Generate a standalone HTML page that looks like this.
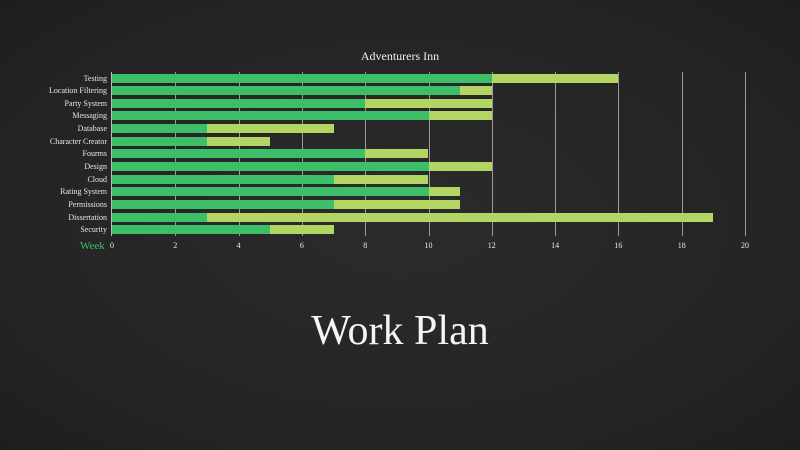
<!DOCTYPE html>
<html><head><style>
body{margin:0;width:800px;height:450px;overflow:hidden;background:radial-gradient(ellipse at center,#2b2b2b 0%,#242424 70%,#1e1e1e 100%);font-family:"Liberation Serif",serif;position:relative}
.a{position:absolute}
.lbl{position:absolute;right:693px;font-size:8px;color:#e8e8e8;white-space:nowrap;line-height:9px}
.g{position:absolute;top:72px;height:164px;width:1px;background:#9a9a9a}
.t{position:absolute;top:241px;font-size:8px;color:#e8e8e8;width:20px;text-align:center;margin-left:-10px}
.b1{position:absolute;height:9px;background:#3dbf6a;left:112px}
.b2{position:absolute;height:9px;background:#b2d564}
</style></head><body>
<div class="a" style="left:0;width:800px;top:49px;text-align:center;font-size:12px;color:#f0f0f0">Adventurers Inn</div>
<div id="c"></div>
<div class="a" style="left:80px;top:240px;font-size:11px;color:#3dbf6a">Week</div>
<div class="a" style="left:0;width:800px;top:307px;text-align:center;font-size:42px;color:#f5f5f5">Work Plan</div>
<script>
var d=[["Testing",12,16],["Location Filtering",11,12],["Party System",8,12],["Messaging",10,12],["Database",3,7],["Character Creator",3,5],["Fourms",8,10],["Design",10,12],["Cloud",7,10],["Rating System",10,11],["Permissions",7,11],["Dissertation",3,19],["Security",5,7]];
var u=31.65,h="";
h+='<div class="g" style="left:111px;background:#bbb"></div>';
for(var k=0;k<=20;k+=2){if(k>0)h+='<div class="g" style="left:'+(112+k*u)+'px"></div>';h+='<div class="t" style="left:'+(112+k*u)+'px">'+k+'</div>';}
d.forEach(function(r,i){var y=73.5+i*12.65;
h+='<div class="lbl" style="top:'+(y)+'px">'+r[0]+'</div>';
h+='<div class="b1" style="top:'+y+'px;width:'+(r[1]*u)+'px"></div>';
h+='<div class="b2" style="top:'+y+'px;left:'+(112+r[1]*u)+'px;width:'+((r[2]-r[1])*u)+'px"></div>';});
document.getElementById("c").innerHTML=h;
</script>
</body></html>
